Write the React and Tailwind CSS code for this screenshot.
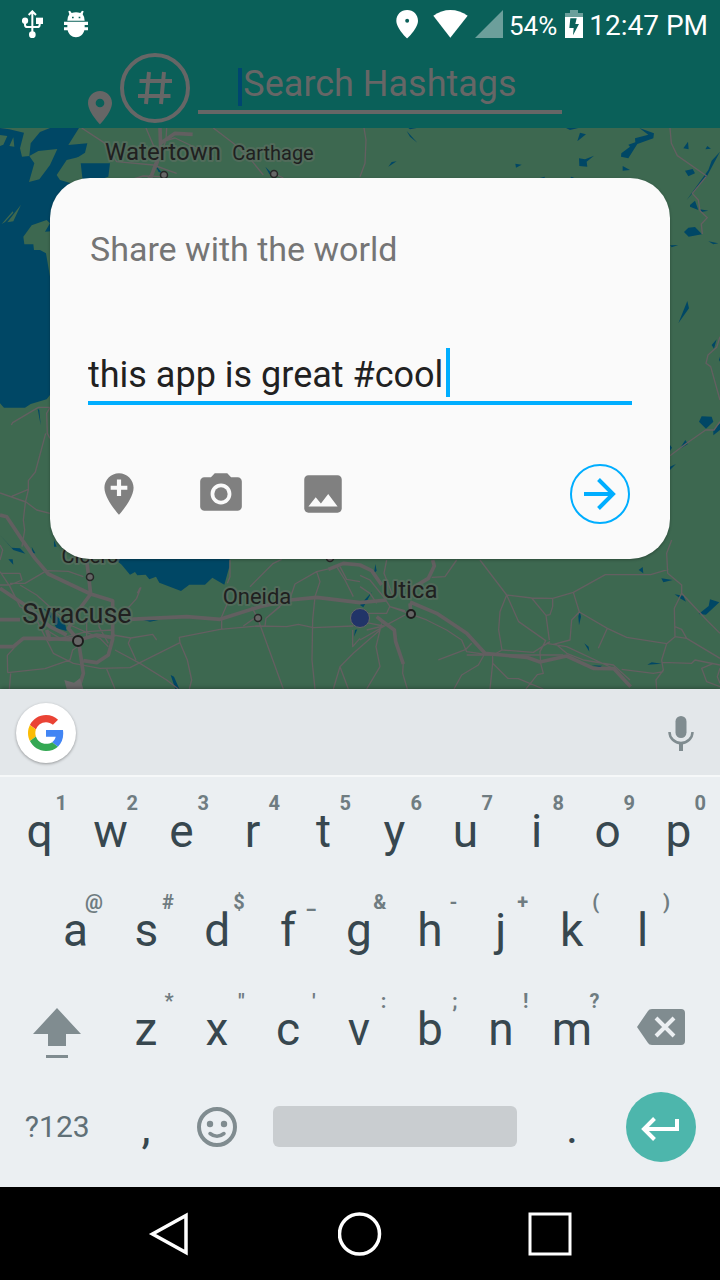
import React from "react";

const ROADS_THIN = [
  "M245 384 L312 428 L350 485 L460 495 L530 520",
  "M438 384 L462 440 L480 480",
  "M500 384 L498 420 L470 500 L440 540",
  "M640 384 L700 430 L745 470 L790 525",
  "M485 425 L525 414 L570 435 L640 470",
  "M390 540 L430 528 L480 530",
  "M820 520 L850 534",
  "M1092 384 L1098 420 L1095 490 L1080 530",
  "M2010 384 L2014 430 L2032 467 L2120 528",
  "M2120 528 L2077 580 L2095 600 L2100 632 L2122 653 L2104 672 L2107 702",
  "M2160 1010 L2150 1042 L2124 1065 L2118 1090 L2132 1100 L2160 1200",
  "M2160 1265 L2142 1290 L2117 1290 L2060 1330 L2010 1367",
  "M34 1275 L38 1268 L115 1222 L150 1222 M150 1222 L140 1240 L142 1300 L150 1315",
  "M137 1300 L106 1416 L85 1442 L85 1470 L76 1508 L70 1560 L74 1590 L66 1640",
  "M0 1479 L78 1506 L110 1530 L150 1540 M35 1489 L85 1468",
  "M0 1635 L8 1650 L0 1680 M5 1720 L60 1720 L66 1740 L30 1755 L0 1755",
  "M0 1715 L30 1760 L60 1820 L100 1840 L135 1910 L160 1960 L220 1990 L300 2005 L390 2003 L540 1928 L538 1912 L660 1888 L770 1878 L860 1880 L895 1873 L940 1883 L1060 1878",
  "M540 1928 L562 1980 L575 2040 L568 2067",
  "M30 1750 L75 1750 L140 1712 L205 1714 L250 1730",
  "M60 1755 L110 1785 L160 1830 L210 1875 L300 1915 L325 1940",
  "M23 2018 L135 2006 L210 1980 L218 1950 L240 1935",
  "M23 2018 L22 1966 L50 1935 M32 2020 L28 2067",
  "M320 2007 L345 2067 M345 1950 L420 1990 L500 2040 L535 2067",
  "M408 1980 L385 1930 L392 1914 L340 1905 M392 1914 L458 1903 L470 1920",
  "M423 1762 L410 1795 L388 1820 L365 1835 M420 1763 L412 1780",
  "M140 1890 L180 1915 L260 1895 L335 1890 L345 1910",
  "M150 1900 L148 1922 L230 1910 M260 1850 L260 1910 M297 1860 L297 1880 L325 1930",
  "M690 1680 L690 1730 L682 1750 M682 1780 L680 1815 L665 1850 L665 1888",
  "M750 1760 L820 1690 L845 1678 M770 1850 L755 1820 M770 1850 L730 1878",
  "M773 1855 L850 2067 M795 1878 L798 1855 L840 1820 M798 1855 L872 1790 L885 1752 L950 1715 L1015 1700",
  "M950 1715 L960 1745 L945 1790 L938 1860 L936 1980 L945 2067",
  "M1010 1700 L1035 1740 L1060 1790 M1020 1700 L1040 1738 L1080 1745",
  "M1080 1726 L1110 1740 L1150 1790 L1170 1820 L1215 1832 M1080 1760 L1110 1780 L1130 1810",
  "M1160 1680 L1152 1720 L1180 1790 M1370 1680 L1335 1730 L1295 1732 M1058 1890 L1058 1940 L1080 1915",
  "M1440 1680 L1520 1785 L1500 1835 L1496 1890 L1506 1950 L1480 1965 L1400 1965",
  "M1520 1785 L1595 1794 L1658 1795 L1720 1777 L1816 1724 L1952 1724 L2005 1708",
  "M1520 1785 L1556 1865 L1637 1922 L1620 1955 L1622 1990 L1630 2020 L1612 2024 L1578 2067",
  "M1595 1794 L1638 1846 L1648 1920 M1658 1795 L1658 1820 L1650 1844 L1638 1846",
  "M1720 1777 L1738 1836 L1822 1885 L1880 1912 L2000 1931 L2025 1910 L2060 1915 L2160 1975",
  "M1738 1836 L1715 1860 L1710 1920 L1660 1933 M1822 1885 L1795 1945",
  "M1506 1950 L1600 1957 L1650 1925 M1470 1965 L1690 1965 M1668 1933 L1700 1960 L1750 1980 L1840 1995 L1890 2040",
  "M1640 1930 L1700 1940 L1850 2010 M1865 2008 L1960 2020 L1990 2015",
  "M2015 1620 L2000 1660 L2003 1720 L2045 1755 L2045 1780 L2023 1825 L2025 1910",
  "M2045 1780 L2120 1860 L2160 1900 M2025 1880 L2045 1888 L2060 1915",
  "M2000 1931 L1985 1980 L1990 2010 L1968 2040 L1970 2067 M1985 1987 L2075 1990 L2085 1980 L2160 1995",
  "M2140 1990 L2105 2005 L2120 2045 L2160 2060 M2160 2005 L2152 2030 L2160 2050",
  "M1170 1820 L1280 1860 L1340 1890 L1385 1920 L1400 1955 L1470 1965",
  "M1215 1845 L1150 1880 L1080 1920 M1415 1930 L1398 1948 L1315 1980",
  "M1452 1965 L1435 1995 L1385 2025 L1362 2067 M1478 1968 L1478 1990 L1523 2035 L1555 2036 L1630 2067",
  "M1478 1990 L1470 2067 M1145 1870 L1128 1940 L1140 2000 L1100 2067",
  "M1170 1818 L1160 1840 L1105 1840 M1100 1868 L1150 1878 L1100 1890",
  "M1140 1890 L1060 1960 L1020 2000 L1000 2067 M1020 2000 L1045 2067 M1210 1985 L1208 2020 L1222 2067",
];

const ROADS_WIDE = [
  "M480 384 L482 445 L468 490 L450 540 M482 430 L525 400 L578 403",
  "M0 1545 L20 1550 L70 1625 L105 1675 L145 1722 L272 1782 L338 1802 L338 1918 L325 1965 L290 1988 L250 1982",
  "M0 1765 L75 1815 L150 1880 L200 1905 M0 1859 L60 1859",
  "M0 1940 L40 1940 L70 1915 L130 1915 L235 1920 L290 1905 L335 1912",
  "M260 1680 L272 1782 L240 1825 L205 1885 L235 1920 L250 2020 L235 2067 M140 1890 L150 1922",
  "M385 1858 L560 1850 L660 1858 L780 1820 L870 1800 L950 1792 L1080 1808 L1160 1800",
  "M1230 1806 L1310 1840 L1400 1900 L1455 1960 L1580 1972 L1620 1986 L1700 1968 L1780 2005 L1842 2006 L1892 2060",
  "M985 1708 L1030 1690 L1080 1695 L1115 1712 L1145 1755 M1298 1680 L1303 1698 L1285 1735 L1230 1768",
  "M1130 1850 L1145 1862 L1183 1890 L1187 1925 L1210 1992 M1230 1810 L1233 1840",
];

const WATER = [
  "M0 384 L28 388 L72 398 L60 445 L66 470 L88 468 L92 430 L120 396 L150 384 L237 384 L205 435 L262 430 L255 458 L205 490 L330 490 L325 530 L280 545 L180 660 L150 830 L150 1185 L140 1198 L92 1212 L75 1223 L12 1223 L0 1210 Z",
  "M300 1640 L365 1694 L390 1724 L405 1716 L412 1726 L437 1724 L448 1738 L468 1730 L478 1748 L543 1773 L568 1754 L615 1754 L637 1733 L673 1754 L688 1700 L690 1640 Z",
  "M130 1825 L160 1840 L195 1870 L200 1893 L170 1885 L150 1850 Z",
  "M465 494 L486 518 L476 516 Z M796 500 L815 520 L808 522 Z",
  "M1220 393 L1252 428 L1230 410 Z M1225 384 L1250 384 L1230 388 Z M1165 500 L1175 486 L1190 484 Z",
  "M1546 491 L1565 494 L1548 503 Z M1732 424 L1740 398 L1758 403 Z M1698 384 L1735 384 L1710 390 Z",
  "M1737 475 L1755 478 L1782 467 L1760 485 L1762 500 L1738 498 Z M1868 498 L1890 510 L1868 512 Z",
  "M1918 384 L1962 400 L1960 415 L1912 432 L1885 475 L1863 470 L1864 460 L1890 440 L1885 434 L1906 427 L1905 415 L1945 404 Z",
  "M2050 445 L2064 425 L2066 448 Z M2116 448 L2122 438 L2133 446 Z M2055 512 L2078 507 L2085 520 L2065 529 Z",
  "M2160 455 L2120 530 L2060 600 L2125 510 L2135 482 Z M1620 534 L1634 530 L1634 540 Z M1705 540 L1715 530 L1730 538 Z",
  "M2070 615 L2085 602 L2095 630 L2070 620 Z M2052 696 L2065 683 L2085 681 L2106 703 L2066 710 Z",
  "M2100 628 L2125 632 L2104 636 Z M2125 724 L2155 730 L2140 733 Z M2010 736 L2035 735 L2015 742 Z",
  "M2035 970 L2062 903 L2067 925 Z M2135 1035 L2150 1018 L2142 1046 Z M2157 1080 L2160 1070 L2160 1085 Z",
  "M2097 1265 L2105 1249 L2135 1250 L2140 1265 L2118 1286 Z M2140 1290 L2160 1270 L2160 1290 L2140 1306 Z",
  "M2038 1348 L2056 1320 L2064 1332 Z M2010 1335 L2016 1343 L2010 1352 Z M2010 1400 L2028 1392 L2010 1410 Z",
  "M113 1226 L118 1230 L122 1276 Z M0 1605 L35 1643 L60 1645 L76 1661 L40 1650 Z M95 1640 L106 1660 L98 1660 Z",
  "M25 1678 L38 1678 L40 1694 Z M162 1620 L170 1640 L162 1640 Z M430 1860 L475 1860 L450 1865 Z",
  "M512 2025 L522 2030 L538 2067 L526 2067 Z M1122 1720 L1126 1692 L1130 1712 Z M1080 1815 L1116 1775 L1090 1822 Z M1062 1910 L1065 1890 L1072 1888 Z",
  "M1735 1848 L1740 1836 L1743 1850 L1737 1876 Z M1753 1930 L1766 1940 L1768 1955 Z M1775 1996 L1806 1997 L1800 2002 Z",
  "M1916 1710 L1928 1701 L1930 1720 Z M1984 1735 L2018 1740 L1990 1747 Z M2024 1783 L2050 1787 L2058 1805 L2040 1795 Z",
  "M2096 1842 L2126 1818 L2130 1798 L2158 1807 L2118 1844 Z M1942 1994 L1955 1987 L1985 1991 Z",
];

const LAND = [
  "M88 468 L115 453 L172 447 L150 495 L118 538 L87 546 L103 490 Z",
  "M0 405 L22 408 L10 434 L0 438 Z M28 438 L40 412 L43 440 Z",
  "M170 525 L200 480 L240 470 L250 560 L180 540 Z",
  "M5 672 L38 634 L40 638 L15 666 Z M22 667 L63 614 L40 664 Z",
  "M70 710 L95 676 L140 660 L150 670 L135 695 L200 690 L200 900 L150 830 L138 760 L120 750 L102 750 L100 733 L73 733 Z",
];

const PLACES = [
  { name: "Watertown", x: 163, y: 160, size: 24 },
  { name: "Carthage", x: 273, y: 160, size: 20 },
  { name: "Cicero", x: 90, y: 563, size: 20 },
  { name: "Syracuse", x: 77, y: 623, size: 27 },
  { name: "Oneida", x: 257, y: 604, size: 22 },
  { name: "Utica", x: 410, y: 598, size: 24 },
];

const TOWN_DOTS = [[164, 175], [274, 174], [90, 577], [258, 618], [330, 558]];

function MapBackground() {
  return (
    <svg className="absolute inset-0 size-full bg-[#3d6850]" viewBox="0 128 720 561" preserveAspectRatio="xMidYMid slice" role="img" aria-label="Map of central New York">
      <g transform="scale(0.33333)">
        <path d={WATER.join(" ")} fill="#004765" />
        <path d={LAND.join(" ")} fill="#3d6850" />
        <path d={ROADS_THIN.join(" ")} fill="none" stroke="#645f61" strokeWidth="4" strokeLinejoin="round" />
        <path d={ROADS_WIDE.join(" ")} fill="none" stroke="#625f60" strokeWidth="11" strokeLinejoin="round" />
        <path d="M193 2040 L222 2048 L240 2035 L250 2067 L200 2067 Z" fill="#686768" />
      </g>
      {TOWN_DOTS.map(([x, y]) => (
        <circle key={x} cx={x} cy={y} r="3.5" fill="#666" stroke="#262626" strokeWidth="1.5" />
      ))}
      <circle cx="78" cy="641" r="5" fill="#666" stroke="#1c1c1c" strokeWidth="2" />
      <circle cx="411" cy="614" r="4" fill="#666" stroke="#1c1c1c" strokeWidth="2" />
      <circle cx="360" cy="618" r="9.5" fill="#213468" stroke="#666" strokeWidth="1" />
      {PLACES.map((p) => (
        <text key={p.name} x={p.x} y={p.y} fontSize={p.size} textAnchor="middle" fill="#202020" stroke="#5b6e60" strokeOpacity="0.7" strokeWidth="4" strokeLinejoin="round" paintOrder="stroke">
          {p.name}
        </text>
      ))}
    </svg>
  );
}

function StatusBar() {
  return (
    <div className="flex h-[50px] items-center justify-between pr-3 pb-0.5 pl-[22px] text-white">
      <div className="flex items-center gap-[21px]">
        <svg className="h-7 w-[21px]" viewBox="66 30 63 84" fill="none" stroke="currentColor" strokeWidth="6">
          <path d="M97 36 V100 M86 45 L97 34 L108 45 M75 62 V74 Q75 81 82 81 H112 Q119 81 119 74 V62" />
          <circle cx="75" cy="62" r="9.5" fill="currentColor" stroke="none" />
          <circle cx="97" cy="104" r="10" fill="currentColor" stroke="none" />
          <path d="M108 53 H129 V72 H108 Z" fill="currentColor" stroke="none" />
        </svg>
        <svg className="h-7 w-6" viewBox="192 31 72 84" fill="currentColor">
          <path d="M205 35 L210 33 L215 40 Q228 35 241 40 L246 33 L251 35 L248 44 Q253 50 254 63 H202 Q203 50 208 44 Z" />
          <path d="M192 66 H264 V76 H254 V83 H264 V92 H253 C250 104 241 113 228 113 C215 113 206 104 203 92 H192 V83 H202 V76 H192 Z" />
          <path d="M216 51 h5 v5 h-5 Z M236 51 h5 v5 h-5 Z" fill="#0a6059" />
        </svg>
      </div>
      <div className="flex items-center">
        <svg className="mr-[15px] h-[30px] w-[22px]" viewBox="107 26 67 88" fill="currentColor">
          <path fillRule="evenodd" d="M141 27 C122 27 108 41 108 60 C108 84 141 114 141 114 C141 114 174 84 174 60 C174 41 160 27 141 27 Z M141 54 a6 6 0 1 1 0 12 a6 6 0 1 1 0 -12 Z" />
        </svg>
        <svg className="mr-[7px] h-7 w-[35px]" viewBox="220 30 105 84" fill="currentColor">
          <path d="M221 47 Q245 30 272 30 Q300 30 324 47 L272 113 Z" />
        </svg>
        <svg className="mr-[6px] h-7 w-7" viewBox="0 0 28 28" fill="currentColor">
          <path d="M0 28 H28 V0 Z" opacity="0.4" />
        </svg>
        <span className="mr-2 pt-1 text-[26px] leading-[30px]">54%</span>
        <svg className="mr-[6px] h-7 w-[18px]" viewBox="0 0 54 84" fill="currentColor">
          <path d="M0 9 H15 V0 H39 V9 H54 V21 H0 Z" opacity="0.4" />
          <path d="M0 21 H54 V84 H0 Z" />
          <path d="M16 25 L35 25 L31 42 L42 42 L24 76 L26 54 L13 54 Z" fill="#0a6059" />
        </svg>
        <span className="pt-1 text-[28px] leading-8">12:47 PM</span>
      </div>
    </div>
  );
}

function SearchHeader() {
  return (
    <header className="flex h-[78px] justify-center pr-[70px] text-[#666]">
      <svg className="mt-[41px] mr-2 h-[34px] w-6 shrink-0" viewBox="264 273 72 102" fill="currentColor">
        <path fillRule="evenodd" d="M300 273 C280 273 264 289 264 309 C264 336 300 373 300 373 C300 373 336 336 336 309 C336 289 320 273 300 273 Z M300 296 a13 13 0 1 1 0 26 a13 13 0 1 1 0 -26 Z" />
      </svg>
      <button type="button" aria-label="Hashtags" className="mt-[3px] mr-2 size-[70px] shrink-0">
        <svg className="size-[70px]" viewBox="0 0 70 70" fill="none" stroke="currentColor">
          <circle cx="35" cy="35" r="33" strokeWidth="4" />
          <path d="M29 19 L26 51 M44 19 L41 51 M19.500 28 H52 M18 43 H50.500" strokeWidth="4" />
        </svg>
      </button>
      <div className="relative mt-[3px] h-[61px] w-[364px] border-b-4 border-[#666]">
        <input type="text" aria-label="Search Hashtags" placeholder="Search Hashtags" className="h-[61px] w-full bg-transparent text-center text-[36px] leading-[42px] outline-none placeholder:text-[#666]" />
        <span className="absolute top-[15px] left-10 h-[38px] w-1 bg-[#004670]" />
      </div>
    </header>
  );
}

function ShareDialog() {
  return (
    <form className="relative rounded-[40px] bg-[#fafafa] px-[38px] pt-[51px] pb-[35px] shadow-[0_1px_3px_rgba(0,0,0,0.3)]" onSubmit={(e) => e.preventDefault()}>
      <label htmlFor="message" className="block pl-0.5 text-[34px] leading-10 text-[#757575]">
        Share with the world
      </label>
      <div className="relative mt-[79px] border-b-4 border-[#00aeff]">
        <input id="message" type="text" defaultValue="this app is great #cool" className="block h-[53px] w-full bg-transparent text-[36px] leading-[42px] text-[#212121] outline-none" />
        <span className="absolute top-0 left-[358px] h-[49px] w-1 bg-[#00aeff]" />
      </div>
      <div className="mt-[59px] flex items-center gap-[52px] pl-1.5 text-[#808080]">
        <button type="button" aria-label="Add location">
          <svg className="size-[50px]" viewBox="0 0 24 24" fill="currentColor">
            <path d="M12 2C8.14 2 5 5.14 5 9c0 5.25 7 13 7 13s7-7.75 7-13c0-3.86-3.14-7-7-7zm4 8h-3v3h-2v-3H8V8h3V5h2v3h3v2z" />
          </svg>
        </button>
        <button type="button" aria-label="Take photo">
          <svg className="size-[50px]" viewBox="0 0 24 24" fill="currentColor">
            <circle cx="12" cy="12" r="3.2" />
            <path d="M9 2L7.17 4H4c-1.1 0-2 .9-2 2v12c0 1.1.9 2 2 2h16c1.1 0 2-.9 2-2V6c0-1.1-.9-2-2-2h-3.17L15 2H9zm3 15c-2.76 0-5-2.24-5-5s2.24-5 5-5 5 2.24 5 5-2.24 5-5 5z" />
          </svg>
        </button>
        <button type="button" aria-label="Add image">
          <svg className="size-[50px]" viewBox="0 0 24 24" fill="currentColor">
            <path d="M21 19V5c0-1.1-.9-2-2-2H5c-1.1 0-2 .9-2 2v14c0 1.1.9 2 2 2h14c1.1 0 2-.9 2-2zM8.5 13.5l2.5 3.01L14.5 12l4.5 6H5l3.5-4.5z" />
          </svg>
        </button>
        <button type="submit" aria-label="Send" className="mr-0.5 ml-auto text-[#00aeff]">
          <svg className="size-[60px]" viewBox="0 0 60 60" fill="none" stroke="currentColor">
            <circle cx="30" cy="30" r="29" strokeWidth="2" />
            <path d="M14 30 H43 M28.500 15.500 L43 30 L28.500 44.500" strokeWidth="4" />
          </svg>
        </button>
      </div>
    </form>
  );
}

const ROW_1 = [["q", "1"], ["w", "2"], ["e", "3"], ["r", "4"], ["t", "5"], ["y", "6"], ["u", "7"], ["i", "8"], ["o", "9"], ["p", "0"]];
const ROW_2 = [["a", "@"], ["s", "#"], ["d", "$"], ["f", "_"], ["g", "&"], ["h", "-"], ["j", "+"], ["k", "("], ["l", ")"]];
const ROW_3 = [["z", "*"], ["x", '"'], ["c", "'"], ["v", ":"], ["b", ";"], ["n", "!"], ["m", "?"]];

function Key({ letter, hint }) {
  return (
    <button type="button" className="relative flex flex-[2] items-center justify-center text-[46px] leading-[54px] text-[#37474f]">
      {letter}
      {hint && <span className="absolute top-3 right-2 text-[20px] leading-5 font-bold text-[#6f7c81]">{hint}</span>}
    </button>
  );
}

function Keyboard() {
  return (
    <section aria-label="Keyboard" className="relative bg-[#ebeff2] shadow-[0_-1px_4px_rgba(0,0,0,0.3)]">
      <div className="flex h-[88px] items-center justify-between border-b-2 border-[#f6f8f9] bg-[#e3e7ea] px-4 pt-0.5">
        <button type="button" aria-label="Google" className="flex size-[60px] items-center justify-center rounded-full bg-white shadow-[0_1px_3px_rgba(0,0,0,0.35)]">
          <svg className="size-9" viewBox="0 0 48 48">
            <path fill="#EA4335" d="M24 9.500c3.540 0 6.710 1.220 9.210 3.600l6.850-6.850C35.900 2.380 30.470 0 24 0 14.620 0 6.510 5.380 2.560 13.220l7.980 6.190C12.430 13.720 17.740 9.500 24 9.500z" />
            <path fill="#4285F4" d="M46.980 24.550c0-1.570-.15-3.090-.38-4.550H24v9.020h12.940c-.58 2.960-2.260 5.480-4.780 7.180l7.730 6c4.510-4.180 7.090-10.360 7.090-17.650z" />
            <path fill="#FBBC05" d="M10.530 28.590c-.48-1.450-.76-2.990-.76-4.590s.27-3.140.76-4.590l-7.980-6.190C.92 16.460 0 20.120 0 24c0 3.880.92 7.540 2.560 10.780l7.970-6.190z" />
            <path fill="#34A853" d="M24 48c6.480 0 11.930-2.130 15.890-5.810l-7.730-6c-2.150 1.450-4.920 2.300-8.160 2.300-6.260 0-11.570-4.220-13.470-9.910l-7.980 6.190C6.510 42.620 14.620 48 24 48z" />
          </svg>
        </button>
        <button type="button" aria-label="Voice input" className="mr-2.5 text-[#808c90]">
          <svg className="h-9 w-[26px]" viewBox="0 0 26 36" fill="currentColor">
            <rect x="7.500" y="1" width="11" height="22" rx="5.500" />
            <path d="M1.500 17 C1.500 23 6.500 28 13 28 C19.500 28 24.500 23 24.500 17" fill="none" stroke="currentColor" strokeWidth="2.500" />
            <path d="M11 28 H15 V36 H11 Z" />
          </svg>
        </button>
      </div>
      <div className="pt-1 pr-1.5 pb-3 pl-1">
        <div className="flex h-[99px]">
          {ROW_1.map(([l, h]) => <Key key={l} letter={l} hint={h} />)}
        </div>
        <div className="flex h-[99px] px-9">
          {ROW_2.map(([l, h]) => <Key key={l} letter={l} hint={h} />)}
        </div>
        <div className="flex h-[99px]">
          <button type="button" aria-label="Shift" className="flex flex-[3] items-center justify-center pt-2 text-[#808c90]">
            <svg className="h-[50px] w-12" viewBox="0 0 48 50" fill="currentColor">
              <path d="M24 0 L48 26 H33 V38 H15 V26 H0 Z M13 47 H35 V50 H13 Z" />
            </svg>
          </button>
          {ROW_3.map(([l, h]) => <Key key={l} letter={l} hint={h} />)}
          <button type="button" aria-label="Backspace" className="flex flex-[3] items-center justify-center pb-1 text-[#808c90]">
            <svg className="h-9 w-12" viewBox="0 0 48 36">
              <path d="M0 18 L11 2 Q12 0 15 0 H44 Q48 0 48 4 V32 Q48 36 44 36 H15 Q12 36 11 34 Z" fill="currentColor" />
              <path d="M19 9 L37 27 M37 9 L19 27" stroke="#ebeff2" strokeWidth="4" />
            </svg>
          </button>
        </div>
        <div className="flex h-[97px]">
          <button type="button" className="flex-[3] text-[30px] leading-9 text-[#607077]">?123</button>
          <Key letter="," />
          <button type="button" aria-label="Emoji" className="flex flex-[2] items-center justify-center text-[#808c90]">
            <svg className="size-10" viewBox="0 0 40 40" fill="none" stroke="currentColor">
              <circle cx="20" cy="20" r="18" strokeWidth="4" />
              <circle cx="13" cy="17" r="3.200" fill="currentColor" stroke="none" />
              <circle cx="27" cy="17" r="3.200" fill="currentColor" stroke="none" />
              <path d="M13 26.500 Q20 32 27 26.500" strokeWidth="3.500" strokeLinecap="round" />
            </svg>
          </button>
          <button type="button" aria-label="Space" className="flex flex-[8] items-center">
            <span className="mx-5 h-[41px] flex-1 rounded-md bg-[#c9cdd0]" />
          </button>
          <Key letter="." />
          <button type="button" aria-label="Enter" className="flex flex-[3] items-center justify-center">
            <svg className="size-[70px]" viewBox="0 0 70 70" fill="none" stroke="#fff" strokeWidth="4">
              <circle cx="35" cy="35" r="35" fill="#4db6ac" stroke="none" />
              <path d="M51 27 V37 H18 M28.500 26.500 L18 37 L28.500 47.500" />
            </svg>
          </button>
        </div>
      </div>
    </section>
  );
}

function NavBar() {
  return (
    <nav aria-label="System" className="relative flex h-[93px] items-center justify-center gap-[146px] bg-black">
      <button type="button" aria-label="Back">
        <svg className="size-11" viewBox="0 0 44 44" fill="none" stroke="#fff" strokeWidth="3.500">
          <path d="M38 3.500 V40.500 L4.500 22 Z" />
        </svg>
      </button>
      <button type="button" aria-label="Home">
        <svg className="size-11" viewBox="0 0 44 44" fill="none" stroke="#fff" strokeWidth="3.500">
          <circle cx="21.500" cy="22" r="20" />
        </svg>
      </button>
      <button type="button" aria-label="Recent apps">
        <svg className="size-11" viewBox="0 0 44 44" fill="none" stroke="#fff" strokeWidth="3">
          <path d="M2 2 H42 V42 H2 Z" />
        </svg>
      </button>
    </nav>
  );
}

export default function App() {
  return (
    <div className="flex min-h-screen flex-col bg-black font-['Roboto',sans-serif]">
      <div className="bg-[#0a6059]">
        <StatusBar />
        <SearchHeader />
      </div>
      <main className="relative flex-1 overflow-hidden px-[50px] pt-[50px] pb-[130px]">
        <MapBackground />
        <ShareDialog />
      </main>
      <Keyboard />
      <NavBar />
    </div>
  );
}
